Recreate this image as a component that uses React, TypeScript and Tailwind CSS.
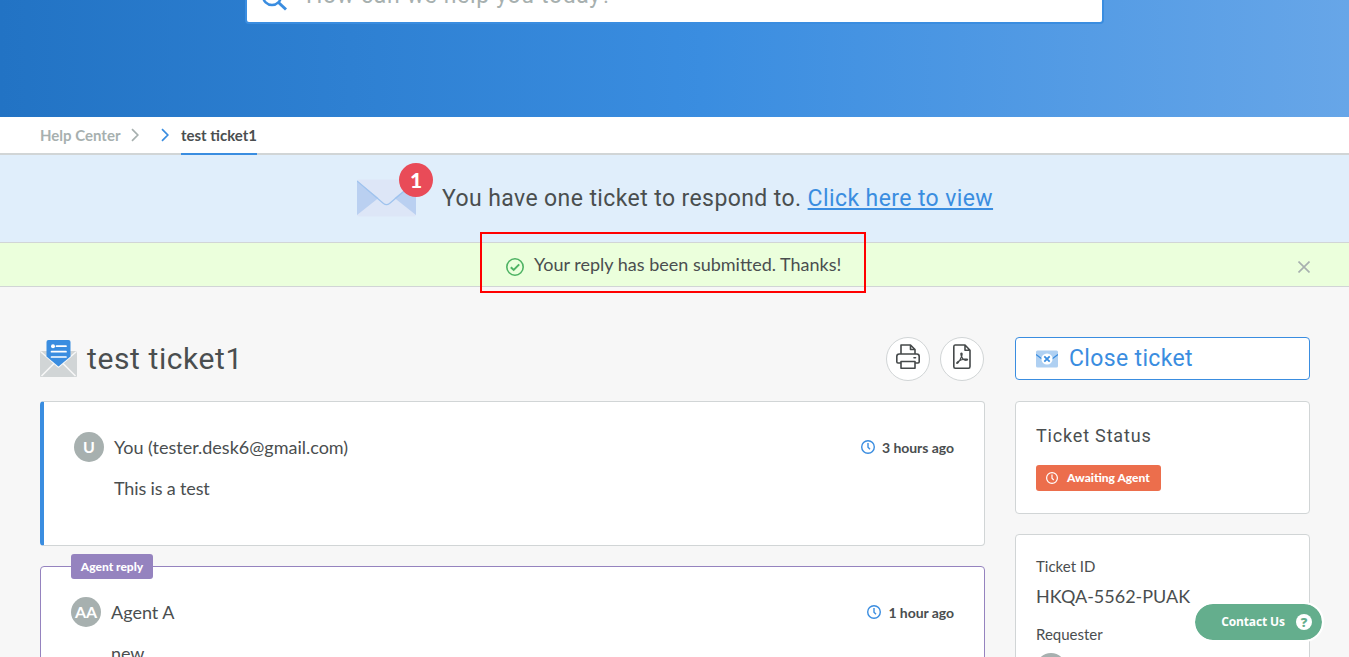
import React from "react";

const lato = "font-['Lato',sans-serif]";
const display = "font-['Roboto',sans-serif]";

function Chevron({ className }: { className: string }) {
  return (
    <svg width="8" height="14" viewBox="0 0 8 14" fill="none" className={className}>
      <path d="M1 1.2 6.8 7 1 12.8" stroke="currentColor" strokeWidth="1.7" />
    </svg>
  );
}

function Clock({ size, className }: { size: number; className?: string }) {
  return (
    <svg width={size} height={size} viewBox="0 0 14 14" fill="none" className={className}>
      <circle cx="7" cy="7" r="6.3" stroke="currentColor" strokeWidth="1.4" />
      <path d="M7 3v4.3l2 2" stroke="currentColor" strokeWidth="1.4" />
    </svg>
  );
}

function Mail() {
  return (
    <svg width="60" height="38" viewBox="0 0 60 38" fill="none">
      <rect x="0" y="0.5" width="59" height="37" rx="2" fill="#dde6f7" />
      <path d="M0 2 21.500 19 0 36zM59 2 37.500 19 59 36z" fill="#bad0f1" />
      <path d="M0 2 26.500 24.500q3 2.200 6 0L59 2" stroke="#9fc3ee" strokeWidth="1.3" />
    </svg>
  );
}

function TicketIcon() {
  return (
    <svg width="37" height="38" viewBox="0 0 37 38" fill="none" className="-mt-[2px]">
      <path d="M0 14q0-2 2-2h33q2 0 2 2v23q0 1-1 1H1q-1 0-1-1z" fill="#d1d5d6" />
      <path d="M1 13l17.500 15L36 13M1.500 37 14 24.500M35.500 37 23 24.500" stroke="#f7f7f7" strokeWidth="1.6" />
      <path d="M6.500 3q0-2 2-2h20q2 0 2 2v14.500L18.500 27.500 6.500 17.500z" fill="#3a8de0" />
      <circle cx="13" cy="7.200" r="2" fill="#fff" />
      <path d="M16.500 7.200H26M11.500 12.700H26M11.500 18H26" stroke="#fff" strokeWidth="1.7" strokeLinecap="round" />
    </svg>
  );
}

function Printer() {
  return (
    <svg width="24" height="25" viewBox="0 0 24 25" fill="none" stroke="#45494a" strokeWidth="1.6" strokeLinejoin="round">
      <path d="M5 10V1h9.500L19 5.500V10M14.500 1v4.500H19" />
      <path d="M5 19H2q-1.200 0-1.200-1.200V12.500Q.8 10 3.300 10h17.400q2.500 0 2.500 2.500v5.300q0 1.200-1.200 1.200h-3" />
      <path d="M5 17.500h14v6.700H5z" />
      <path d="M18 13.700h1.500" strokeLinecap="round" />
    </svg>
  );
}

function Pdf() {
  return (
    <svg width="18" height="25" viewBox="0 0 18 25" fill="none" stroke="#45494a" strokeWidth="1.6" strokeLinejoin="round">
      <path d="M2 1h10l5 5.200V22.500q0 1.700-1.500 1.700H2.300q-1.500 0-1.500-1.700V2.700Q.8 1 2 1zM12 1v5.200h5" />
      <path d="M8.300 9c-1.200 0 .2 5.200 2.700 6.700 1.700 1 3.600.6 3.600-.2 0-1-5.500-.2-8.300 1.300-2.600 1.300-3 2.500-2.300 2.700 1.300.3 5.500-7.500 5.100-9.800-.1-.6-.4-.7-.8-.7z" strokeWidth="1.200" />
    </svg>
  );
}

function CloseMail() {
  return (
    <svg width="22" height="18" viewBox="0 0 22 18" fill="none">
      <rect y=".5" width="22" height="17" rx="1.5" fill="#afd0f2" />
      <path d="M0 4.500 6 9M22 4.500 16 9" stroke="#3a8de0" strokeWidth="1.200" />
      <circle cx="11" cy="9" r="5.600" fill="#fff" />
      <path d="m8.300 6.300 5.400 5.400m0-5.400-5.400 5.400" stroke="#3a8de0" strokeWidth="1.800" />
    </svg>
  );
}

function Avatar({ label }: { label: string }) {
  return (
    <span className="flex h-[30px] w-[30px] shrink-0 items-center justify-center rounded-full bg-[#a7b0af] pb-px text-[16px] leading-none font-bold text-white">
      {label}
    </span>
  );
}

function Reply({ label, name, time, text, className }: { label: string; name: string; time: string; text: string; className: string }) {
  return (
    <article className={className}>
      <div className="flex h-[30px] items-center">
        <Avatar label={label} />
        <span className="ml-[10px] flex-1 text-[18px] leading-[30px]">{name}</span>
        <Clock size={14} className="mr-[7px] text-[#3a8de0]" />
        <time className="pt-[2px] text-[14px] leading-[28px] font-bold tracking-[-0.05px]">{time}</time>
      </div>
      <p className="mt-[12px] ml-10 text-[18px] leading-[28px] tracking-[-0.15px]">{text}</p>
    </article>
  );
}

export default function App() {
  return (
    <div className={`${lato} relative flex h-[657px] w-full flex-col overflow-hidden bg-[#f7f7f7] text-[#4a4e4f]`}>
      <header className="flex h-[117px] shrink-0 justify-center bg-[linear-gradient(90deg,#2273c4_0%,#3a8de0_52%,#67a6e8_100%)]">
        <div className="-mt-[32px] flex h-[56px] w-[859px] items-center rounded-[4px] border-2 border-[#3a8de0] bg-white pl-[14px]">
          <svg width="27" height="27" viewBox="0 0 27 27" fill="none" className="mt-[2px] text-[#3a8de0]">
            <circle cx="11" cy="12" r="9" stroke="currentColor" strokeWidth="2.500" />
            <path d="m17.500 18.500 7.500 7" stroke="currentColor" strokeWidth="3" />
          </svg>
          <span className={`${display} ml-[18px] text-[23px] leading-[30px] tracking-[0.65px] text-[#a7b0af]`}>How can we help you today?</span>
        </div>
      </header>

      <nav className="flex h-[38px] shrink-0 items-start border-b-2 border-[#d1d5d6] bg-white pl-10 text-[15px] font-bold">
        <span className="leading-[37px] text-[#a7b0af]">Help Center</span>
        <Chevron className="mt-[11px] ml-[11px] text-[#a7b0af]" />
        <Chevron className="mt-[11px] ml-[22px] text-[#3a8de0]" />
        <span className="ml-[11.5px] h-[38px] border-b-2 border-[#3a8de0] leading-[37px]">test ticket1</span>
      </nav>

      <section className="flex h-[88px] shrink-0 items-center border-b border-[#d1d5d6] bg-[#e0eefb] pl-[356px]">
        <div className="relative -mt-[2px] mr-[25px] ml-px">
          <Mail />
          <span className="absolute -top-[16px] left-[42px] flex h-[34px] w-[34px] items-center justify-center rounded-full bg-[#e94b58] text-[21px] font-black text-white">1</span>
        </div>
        <p className={`${display} text-[23px] leading-[30px] tracking-[0.4px] whitespace-nowrap`}>
          You have one ticket to respond to.{" "}
          <a className="text-[#3a8de0] underline decoration-2 underline-offset-[2px]">Click here to view</a>
        </p>
      </section>

      <section className="flex h-[44px] shrink-0 items-center border-b border-[#d1d5d6] bg-[#ebffdc] pr-[39px] pl-[506px]">
        <svg width="18" height="18" viewBox="0 0 18 18" fill="none" className="mt-[5px]" stroke="#4fb364">
          <circle cx="9" cy="9" r="8.200" strokeWidth="1.600" />
          <path d="m4.800 9.200 2.900 2.700 5.500-5.500" strokeWidth="2" />
        </svg>
        <p className="-mt-px ml-[10px] flex-1 text-[18px] leading-[30px]">Your reply has been submitted. Thanks!</p>
        <svg width="12" height="12" viewBox="0 0 12 12" className="mt-[5px]" stroke="#a7b0af" strokeWidth="1.600">
          <path d="m.5.5 11 11m0-11-11 11" />
        </svg>
      </section>

      <main className="flex gap-[30px] px-10 pt-[50px] pr-[39px]">
        <div className="min-w-0 flex-1">
          <div className="flex h-[44px] items-center">
            <TicketIcon />
            <h1 className={`${display} ml-[10px] flex-1 text-[30px] leading-[40px] tracking-[0.6px]`}>test ticket1</h1>
            <button className="mr-[10px] flex h-[44px] w-[44px] items-center justify-center rounded-full border border-[#d1d5d6] bg-white pb-[5px]"><Printer /></button>
            <button className="mr-px flex h-[44px] w-[44px] items-center justify-center rounded-full border border-[#d1d5d6] bg-white pb-[5px]"><Pdf /></button>
          </div>
          <Reply
            label="U"
            name="You (tester.desk6@gmail.com)"
            time="3 hours ago"
            text="This is a test"
            className="mt-[20px] h-[145px] rounded-[4px] border border-l-4 border-[#d1d5d6] border-l-[#3a8de0] bg-white pt-[30px] pr-[30px] pl-[30px]"
          />
          <div className="relative mt-[20px]">
            <span className="absolute -top-[12px] left-[31px] flex h-[25px] w-[82px] items-center justify-center rounded-[3px] bg-[#9583bf] text-[12px] font-black text-white">Agent reply</span>
            <Reply
              label="AA"
              name="Agent A"
              time="1 hour ago"
              text="new"
              className="h-[180px] rounded-[4px] border border-[#9583bf] bg-white px-[30px] pt-[30px]"
            />
          </div>
        </div>

        <aside className="w-[295px]">
          <button className={`${display} flex h-[43px] w-full items-center rounded-[4px] border border-[#3a8de0] bg-white pl-5 text-[23px] tracking-[0.35px] text-[#3a8de0]`}>
            <CloseMail />
            <span className="ml-[11px] pt-[2px]">Close ticket</span>
          </button>
          <section className="mt-[21px] h-[113px] rounded-[4px] border border-[#d1d5d6] bg-white px-5 pt-[19px]">
            <h2 className={`${display} text-[18px] leading-[30px] tracking-[0.82px]`}>Ticket Status</h2>
            <span className="mt-[14px] flex h-[26px] w-[125px] items-center rounded-[3px] bg-[#ec6e4c] pl-[10px] text-[12px] font-black text-white">
              <Clock size={12} className="mr-[9px]" />
              Awaiting Agent
            </span>
          </section>
          <section className="mt-[20px] h-[200px] rounded-[4px] border border-[#d1d5d6] bg-white px-5 pt-[18px]">
            <h3 className="text-[15px] leading-[26px]">Ticket ID</h3>
            <p className="mt-[2px] text-[18px] leading-[30px]">HKQA-5562-PUAK</p>
            <h3 className="mt-[10px] text-[15px] leading-[26px]">Requester</h3>
            <div className="mt-[6px]"><Avatar label="" /></div>
          </section>
        </aside>
      </main>

      <button className="absolute top-[602px] left-[1193px] flex h-[40px] w-[131px] items-center rounded-full border-2 border-white bg-[#64ae8d] bg-clip-padding pl-[26px] font-['Open_Sans',sans-serif] text-[12px] font-bold tracking-[-0.15px] text-white">
        <span className="w-[64px] whitespace-nowrap">Contact Us</span>
        <span className="ml-[11px] flex h-[16px] w-[16px] items-center justify-center rounded-full bg-white text-[13px] leading-none font-extrabold text-[#64ae8d]">?</span>
      </button>
      <div className="pointer-events-none absolute top-[232px] left-[480px] h-[61px] w-[386px] border-2 border-[#ff0000]" />
    </div>
  );
}
